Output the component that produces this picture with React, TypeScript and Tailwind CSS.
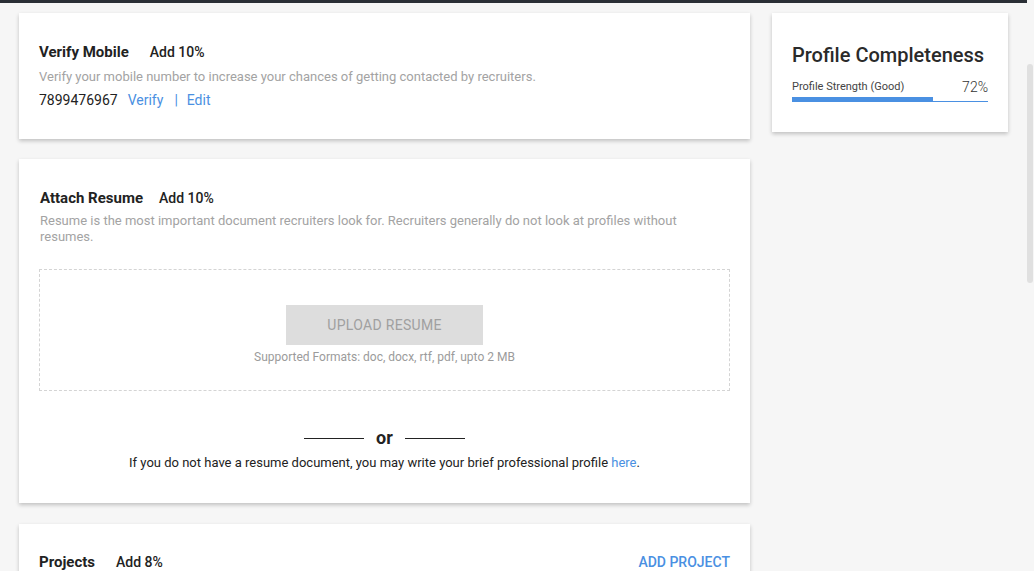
export default function App() {
  return (
    <div
      className="relative h-[571px] w-[1034px] overflow-hidden bg-[#f6f6f6] text-[#222]"
      style={{ fontFamily: "Roboto, 'Liberation Sans', sans-serif" }}
    >
      <div className="h-[3px] w-[1027px] bg-[#2b2f36]" />
      <div className="flex items-start pl-[19px] pt-[10px]">
        <div className="flex w-[731px] flex-col gap-5">
          {/* verify mobile */}
          <div className="bg-white px-5 pt-[29px] pb-[29px] shadow-[0_2px_4px_rgba(0,0,0,0.22)]">
            <div className="flex items-center leading-5">
              <span className="text-[15px] font-bold text-[#222]">Verify Mobile</span>
              <span className="ml-[21px] text-[14px] font-medium text-[#222]">Add 10%</span>
            </div>
            <p className="mt-[5px] text-[13px] leading-5 text-[#a3a3a3]">
              Verify your mobile number to increase your chances of getting contacted by recruiters.
            </p>
            <div className="mt-[3px] flex items-center text-[14px] leading-5">
              <span className="text-[#222]">7899476967</span>
              <span className="ml-[10px] text-[#4a90e2]">Verify</span>
              <span className="ml-[11px] mr-[9px] text-[#4a90e2]">|</span>
              <span className="text-[#4a90e2]">Edit</span>
            </div>
          </div>

          {/* attach resume */}
          <div className="bg-white px-5 pt-[29px] pb-[30px] shadow-[0_2px_4px_rgba(0,0,0,0.22)]">
            <div className="flex items-center pl-px leading-5">
              <span className="text-[15px] font-bold text-[#222]">Attach Resume</span>
              <span className="ml-[16px] text-[14px] font-medium text-[#222]">Add 10%</span>
            </div>
            <p className="mt-[5px] pl-px pr-10 text-[13px] leading-4 text-[#a3a3a3]">
              Resume is the most important document recruiters look for. Recruiters generally do not look at profiles without resumes.
            </p>
            <div className="mt-[24px] flex h-[122px] flex-col items-center border border-dashed border-[#d4d4d4] pt-[35px]">
              <button
                type="button"
                className="h-10 w-[197px] bg-[#dddddd] text-[14px] tracking-[0.3px] text-[#a0a0a0]"
              >
                UPLOAD RESUME
              </button>
              <p className="mt-[2px] text-[12px] leading-5 text-[#9b9b9b]">
                Supported Formats: doc, docx, rtf, pdf, upto 2 MB
              </p>
            </div>
            <div className="mt-[35px] flex items-center justify-center">
              <span className="h-px w-[60px] bg-[#222]" />
              <span className="mx-[12px] text-[18px] font-bold leading-6 text-[#222]">or</span>
              <span className="h-px w-[60px] bg-[#222]" />
            </div>
            <p className="mt-[3px] text-center text-[13px] leading-5 text-[#222]">
              If you do not have a resume document, you may write your brief professional profile{" "}
              <span className="text-[#4a90e2]">here</span>.
            </p>
          </div>

          {/* projects */}
          <div className="mt-px bg-white px-5 pt-[28px] pb-8 shadow-[0_2px_4px_rgba(0,0,0,0.22)]">
            <div className="flex items-center justify-between leading-5">
              <div className="flex items-center">
                <span className="text-[15px] font-bold text-[#222]">Projects</span>
                <span className="ml-[21px] text-[14px] font-medium text-[#222]">Add 8%</span>
              </div>
              <span className="text-[14px] font-medium text-[#4a90e2]">ADD PROJECT</span>
            </div>
          </div>
        </div>

        {/* profile completeness */}
        <div className="ml-[22px] w-[236px] bg-white px-5 pt-[28px] pb-[30px] shadow-[0_2px_4px_rgba(0,0,0,0.22)]">
          <h2 className="text-[20px] font-medium leading-7 text-[#2a2a2a]">Profile Completeness</h2>
          <div className="mt-[10px] flex items-end justify-between">
            <span className="text-[11px] leading-4 text-[#444]">Profile Strength (Good)</span>
            <span className="text-[14px] font-light leading-4 text-[#333]">72%</span>
          </div>
          <div className="mt-[2px] flex h-[5px] items-end">
            <div className="h-[5px] w-[72%] bg-[#4a90e2]" />
            <div className="h-px flex-1 bg-[#4a90e2]" />
          </div>
        </div>
      </div>

      {/* scrollbar thumb */}
      <div className="absolute right-px top-[64px] h-[219px] w-[6px] rounded-full bg-[#e0e0e0]" />
    </div>
  );
}
